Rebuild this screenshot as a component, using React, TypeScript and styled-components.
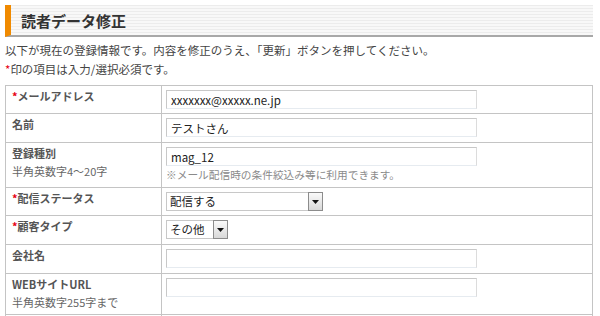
import React from "react";
import styled, { createGlobalStyle } from "styled-components";

const Global = createGlobalStyle`
  html, body { margin: 0; padding: 0; background: #fff; }
  body { font-family: "Noto Sans CJK JP", "Noto Sans", sans-serif; color: #444; }
  * { box-sizing: border-box; }
`;

const Page = styled.div`
  width: 600px;
  padding: 5px 7px 0 5px;
`;

const Header = styled.div`
  display: flex;
  align-items: center;
  height: 32px;
  border-left: 6px solid #f08a00;
  border-bottom: 2px solid #a8a8a8;
  background: repeating-linear-gradient(
    to bottom,
    #ececec 0px,
    #ececec 1px,
    #f8f8f8 1px,
    #f8f8f8 3px
  );
  padding-left: 10px;
`;

const Title = styled.h1`
  margin: 0;
  font-size: 15px;
  font-weight: bold;
  color: #333;
  line-height: 1;
`;

const Intro = styled.p`
  margin: 4px 0 6px;
  font-size: 11.5px;
  line-height: 19px;
  color: #444;
`;

const Req = styled.span`
  color: #e60012;
`;

const Table = styled.table`
  width: 588px;
  border-collapse: collapse;
  font-size: 11px;
`;

const Row = styled.tr<{ $h: number }>`
  height: ${(p) => p.$h}px;
`;

const LabelCell = styled.th`
  width: 156px;
  border: 1px solid #c4c4c4;
  padding: 1px 6px 3px;
  text-align: left;
  vertical-align: top;
  font-weight: bold;
  color: #555;
  line-height: 18px;
`;

const SubNote = styled.div`
  font-weight: normal;
  color: #666;
`;

const FieldCell = styled.td`
  border: 1px solid #c4c4c4;
  padding: 4px 5px 3px 4px;
  vertical-align: top;
`;

const TextInput = styled.input`
  display: block;
  width: 311px;
  height: 19px;
  margin: 0;
  padding: 0 4px;
  border: 1px solid #c8c8c8;
  border-bottom-color: #e6ebf0;
  border-right-color: #dcdcdc;
  font-family: "Noto Sans CJK JP", "Noto Sans", sans-serif;
  font-size: 11.5px;
  color: #222;
  background: #fff;
  outline: none;
`;

const Note = styled.div`
  margin-top: 1px;
  color: #8a8a8a;
  font-size: 10.7px;
  line-height: 16px;
`;

const SelectBox = styled.div<{ $w: number }>`
  display: flex;
  width: ${(p) => p.$w}px;
  height: 19px;
  border: 1px solid #c8c8c8;
  background: #fff;
`;

const SelectValue = styled.span`
  flex: 1;
  padding-left: 3px;
  font-size: 11.5px;
  line-height: 17px;
  color: #222;
`;

const ArrowButton = styled.span`
  width: 15px;
  margin: -1px -1px -1px 0;
  border: 1px solid #8c8c8c;
  background: linear-gradient(#fafafa, #d8d8d8);
  display: flex;
  align-items: center;
  justify-content: center;
`;

const Arrow = () => (
  <svg width="7" height="4" viewBox="0 0 7 4">
    <path d="M0 0h7L3.5 4z" fill="#111" />
  </svg>
);

type Sel = { value: string; width: number };

const Select = ({ value, width }: Sel) => (
  <SelectBox $w={width}>
    <SelectValue>{value}</SelectValue>
    <ArrowButton>
      <Arrow />
    </ArrowButton>
  </SelectBox>
);

export default function App() {
  return (
    <Page>
      <Global />
      <Header>
        <Title>読者データ修正</Title>
      </Header>
      <Intro>
        以下が現在の登録情報です。内容を修正のうえ、「更新」ボタンを押してください。
        <br />
        <Req>*</Req>印の項目は入力/選択必須です。
      </Intro>
      <Table>
        <tbody>
          <Row $h={28}>
            <LabelCell>
              <Req>*</Req>メールアドレス
            </LabelCell>
            <FieldCell>
              <TextInput defaultValue="xxxxxxx@xxxxx.ne.jp" />
            </FieldCell>
          </Row>
          <Row $h={29}>
            <LabelCell>名前</LabelCell>
            <FieldCell>
              <TextInput defaultValue="テストさん" />
            </FieldCell>
          </Row>
          <Row $h={45}>
            <LabelCell>
              登録種別
              <SubNote>半角英数字4～20字</SubNote>
            </LabelCell>
            <FieldCell>
              <TextInput defaultValue="mag_12" />
              <Note>※メール配信時の条件絞込み等に利用できます。</Note>
            </FieldCell>
          </Row>
          <Row $h={28}>
            <LabelCell>
              <Req>*</Req>配信ステータス
            </LabelCell>
            <FieldCell>
              <Select value="配信する" width={157} />
            </FieldCell>
          </Row>
          <Row $h={29}>
            <LabelCell>
              <Req>*</Req>顧客タイプ
            </LabelCell>
            <FieldCell>
              <Select value="その他" width={62} />
            </FieldCell>
          </Row>
          <Row $h={29}>
            <LabelCell>会社名</LabelCell>
            <FieldCell>
              <TextInput defaultValue="" />
            </FieldCell>
          </Row>
          <Row $h={39}>
            <LabelCell>
              WEBサイトURL
              <SubNote>半角英数字255字まで</SubNote>
            </LabelCell>
            <FieldCell>
              <TextInput defaultValue="" />
            </FieldCell>
          </Row>
          <Row $h={29}>
            <LabelCell>&nbsp;</LabelCell>
            <FieldCell>&nbsp;</FieldCell>
          </Row>
        </tbody>
      </Table>
    </Page>
  );
}
